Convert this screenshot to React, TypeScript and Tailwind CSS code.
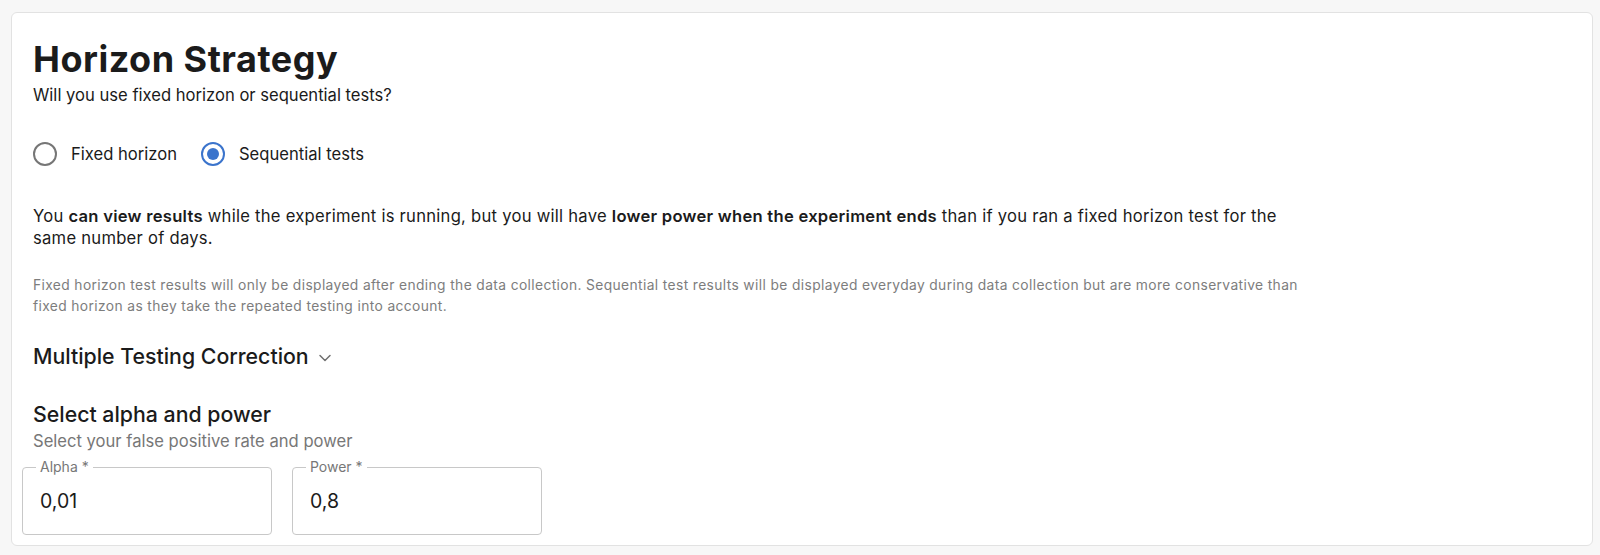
import React from "react";

function Radio({ checked, label }: { checked: boolean; label: string }) {
  return (
    <label className="flex items-center gap-[14px]">
      {checked ? (
        <span className="flex h-[24px] w-[24px] items-center justify-center rounded-full border-2 border-[#3b74cc]">
          <span className="h-[12px] w-[12px] rounded-full bg-[#3b74cc]" />
        </span>
      ) : (
        <span className="h-[24px] w-[24px] rounded-full border-2 border-[#767676]" />
      )}
      <span className="text-[16.6px] leading-[24px] text-[#1b1b1b]">{label}</span>
    </label>
  );
}

function Field({ label, value }: { label: string; value: string }) {
  return (
    <div className="relative h-[68px] w-[250px] rounded-[4px] border border-[#c8c8c8] bg-white">
      <span className="absolute left-[13px] top-[-10px] bg-white px-[4px] text-[14px] leading-[18px] text-[#777]">
        {label}
      </span>
      <div className="pl-[17px] pt-[20px] text-[19.5px] leading-[26px] text-[#1b1b1b]">{value}</div>
    </div>
  );
}

export default function App() {
  return (
    <div
      className="h-[555px] w-[1600px] bg-[#f7f7f7] pt-[12px] pl-[11px]"
      style={{ fontFamily: "Inter, 'Noto Sans', sans-serif" }}
    >
      <div className="flex h-[534px] w-[1582px] flex-col rounded-[6px] border border-[#e2e2e2] bg-white pl-[21px] pt-[24px]">
        <h1 className="text-[36px] font-bold leading-[44px] tracking-[0.5px] text-[#1b1b1b]">Horizon Strategy</h1>
        <p className="mt-[3px] text-[16.6px] leading-[22px] text-[#1b1b1b]">Will you use fixed horizon or sequential tests?</p>
        <div className="mt-[36px] flex items-center gap-[24px]">
          <Radio checked={false} label="Fixed horizon" />
          <Radio checked={true} label="Sequential tests" />
        </div>
        <p className="mt-[39px] max-w-[1282px] text-[16.6px] leading-[22px] tracking-[0.26px] text-[#1b1b1b]">
          You <b className="font-semibold">can view results</b> while the experiment is running, but you will have{" "}
          <b className="font-semibold">lower power when the experiment ends</b> than if you ran a fixed horizon test for the same number of days.
        </p>
        <p className="mt-[26px] max-w-[1282px] text-[13.8px] leading-[21px] tracking-[0.38px] text-[#7d7d7d]">
          Fixed horizon test results will only be displayed after ending the data collection. Sequential test results will be displayed everyday during data collection but are more conservative than fixed horizon as they take the repeated testing into account.
        </p>
        <div className="mt-[25px] flex items-center gap-[8px]">
          <h2 className="text-[21.3px] font-medium leading-[28px] text-[#1b1b1b]">Multiple Testing Correction</h2>
          <svg width="16" height="16" viewBox="0 0 16 16" className="mt-[3px]">
            <path d="M3 5.5 L8 10.5 L13 5.5" fill="none" stroke="#707070" strokeWidth="1.5" strokeLinecap="round" strokeLinejoin="round" />
          </svg>
        </div>
        <h2 className="mt-[30px] text-[21.3px] font-medium leading-[28px] text-[#1b1b1b]">Select alpha and power</h2>
        <p className="mt-[2px] text-[16.6px] leading-[22px] text-[#777]">Select your false positive rate and power</p>
        <div className="ml-[-11px] mt-[15px] flex gap-[20px]">
          <Field label="Alpha *" value="0,01" />
          <Field label="Power *" value="0,8" />
        </div>
      </div>
    </div>
  );
}
